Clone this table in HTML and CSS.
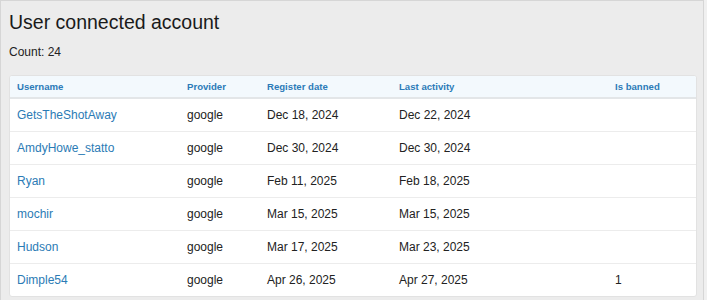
FILE: index.html
```html
<!DOCTYPE html>
<html lang="en">

<head>
    <meta charset="UTF-8">
    <meta name="viewport" content="width=device-width, initial-scale=1.0">
    <title>User connected account</title>
    <link rel="stylesheet" href="styles.css">
</head>

<body>
    <div class="page">
        <h1 class="page-title">User connected account</h1>
        <p class="page-count">Count: 24</p>

        <div class="card">
            <table class="accounts">
                <thead>
                    <tr>
                        <th class="col-user">Username</th>
                        <th class="col-provider">Provider</th>
                        <th class="col-register">Register date</th>
                        <th class="col-activity">Last activity</th>
                        <th class="col-banned">Is banned</th>
                    </tr>
                </thead>
                <tbody>
                    <tr>
                        <td><a href="#">GetsTheShotAway</a></td>
                        <td>google</td>
                        <td>Dec 18, 2024</td>
                        <td>Dec 22, 2024</td>
                        <td></td>
                    </tr>
                    <tr>
                        <td><a href="#">AmdyHowe_statto</a></td>
                        <td>google</td>
                        <td>Dec 30, 2024</td>
                        <td>Dec 30, 2024</td>
                        <td></td>
                    </tr>
                    <tr>
                        <td><a href="#">Ryan</a></td>
                        <td>google</td>
                        <td>Feb 11, 2025</td>
                        <td>Feb 18, 2025</td>
                        <td></td>
                    </tr>
                    <tr>
                        <td><a href="#">mochir</a></td>
                        <td>google</td>
                        <td>Mar 15, 2025</td>
                        <td>Mar 15, 2025</td>
                        <td></td>
                    </tr>
                    <tr>
                        <td><a href="#">Hudson</a></td>
                        <td>google</td>
                        <td>Mar 17, 2025</td>
                        <td>Mar 23, 2025</td>
                        <td></td>
                    </tr>
                    <tr>
                        <td><a href="#">Dimple54</a></td>
                        <td>google</td>
                        <td>Apr 26, 2025</td>
                        <td>Apr 27, 2025</td>
                        <td>1</td>
                    </tr>
                </tbody>
            </table>
        </div>
    </div>
</body>

</html>
```

FILE: styles.css
```css
* {
    margin: 0;
    padding: 0;
    box-sizing: border-box;
}

body {
    background: #f0f0f0;
    color: #222;
    font-family: "Liberation Sans", Arial, sans-serif;
    overflow: hidden;
}

.page {
    width: 704px;
    height: 300px;
    background: #ececec;
    border: 1px solid #d6d6d6;
    border-bottom: none;
    padding: 9px 6px 0 8px;
}

.page-title {
    font-size: 19.5px;
    font-weight: 400;
    color: #1a1a1a;
    line-height: 24px;
}

.page-count {
    font-size: 12px;
    line-height: 16px;
    margin-top: 10px;
}

.card {
    margin-top: 15px;
    background: #fff;
    border: 1px solid #e2e2e2;
    border-radius: 3px;
    overflow: hidden;
}

.accounts {
    width: 100%;
    border-collapse: collapse;
}

.accounts th {
    background: #f3f9fd;
    color: #2c7bb8;
    font-size: 9.6px;
    font-weight: 700;
    text-align: left;
    height: 22px;
    padding: 0 7px;
    border-bottom: 2px solid #e3e6e8;
}

.accounts td {
    font-size: 12px;
    height: 33px;
    padding: 0 7px;
    border-bottom: 1px solid #ececec;
}

.accounts tbody tr:last-child td {
    border-bottom: none;
}

.accounts a {
    color: #2b7bb5;
    text-decoration: none;
}

.col-user {
    width: 170px;
}

.col-provider {
    width: 80px;
}

.col-register {
    width: 132px;
}

.col-activity {
    width: 216px;
}
```
